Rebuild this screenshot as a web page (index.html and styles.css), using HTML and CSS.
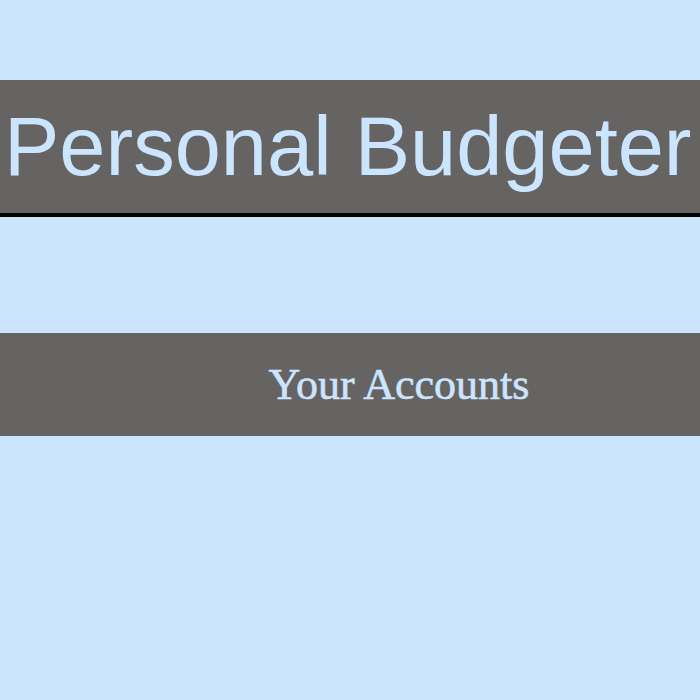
FILE: index.html
```html
<!DOCTYPE html>
<html>
<head>
<meta charset="utf-8">
<link rel="stylesheet" href="styles.css">
</head>
<body>
<header class="masthead">
  <h1 class="title">Personal Budgeter</h1>
</header>
<section class="accounts-bar">
  <h2 class="accounts-title">Your Accounts</h2>
</section>
</body>
</html>
```
FILE: styles.css
```css
html, body {
  margin: 0;
  padding: 0;
  background: #cce5ff;
}
body {
  padding-top: 80px;
}
.masthead {
  height: 133px;
  background: #666363;
  border-bottom: 4px solid #000;
  display: flex;
  align-items: center;
}
.title {
  margin: 0;
  padding: 0 0 0 4px;
  font-family: "Liberation Sans", Arial, sans-serif;
  font-weight: normal;
  font-size: 83px;
  color: #cce5ff;
  white-space: nowrap;
}
.accounts-bar {
  margin-top: 116px;
  height: 103px;
  background: #666363;
  display: flex;
  align-items: center;
  justify-content: center;
  padding-left: 98px;
}
.accounts-title {
  margin: 0;
  font-family: "Liberation Serif", "Times New Roman", serif;
  font-weight: normal;
  font-size: 44px;
  color: #cce5ff;
  -webkit-text-stroke: 0.6px #cce5ff;
}
```
